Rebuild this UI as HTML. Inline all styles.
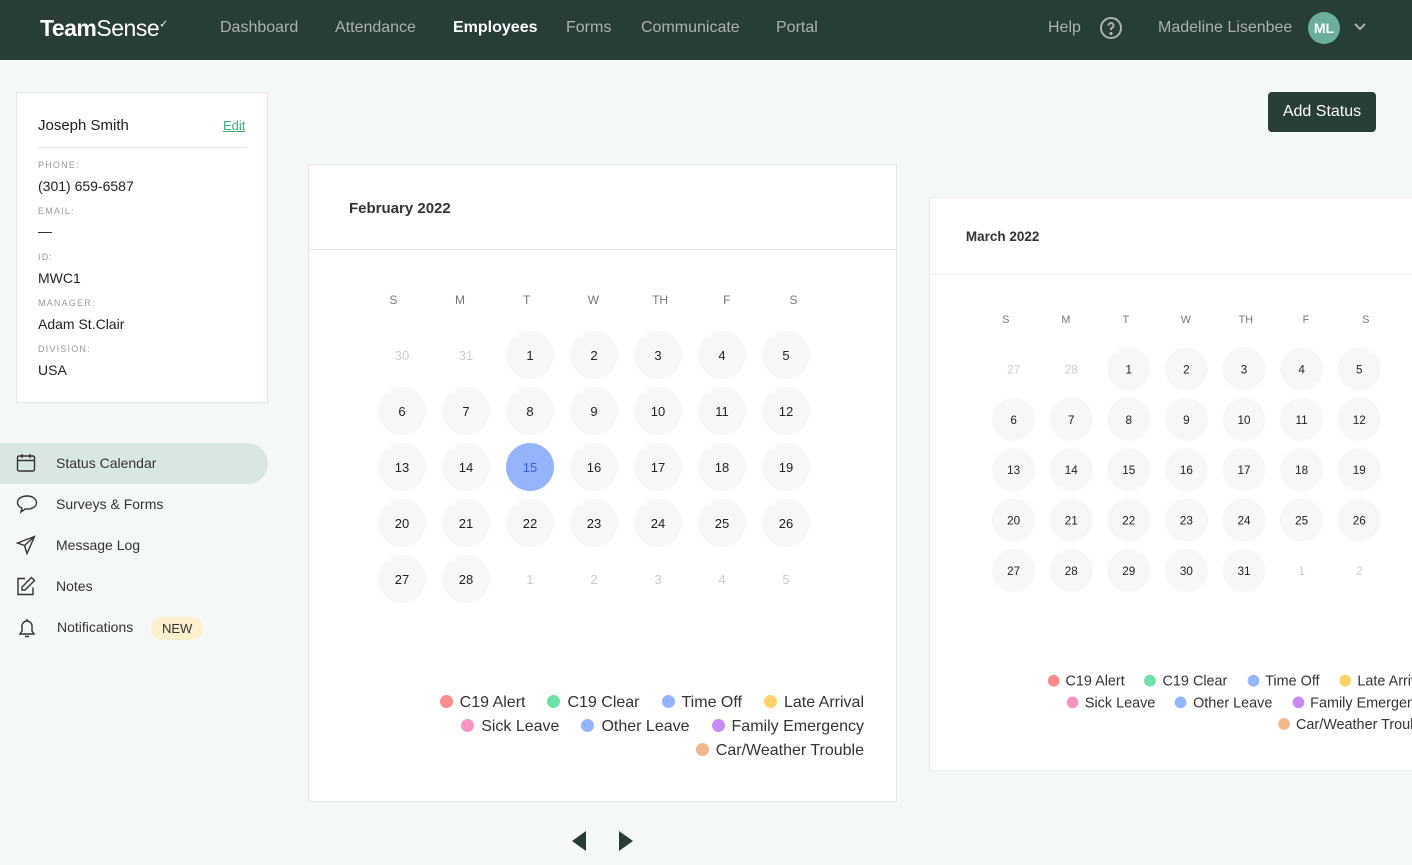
<!DOCTYPE html>
<html><head><meta charset="utf-8"><style>
*{box-sizing:border-box;margin:0;padding:0}
body{width:1412px;height:865px;overflow:hidden;background:#f4f8f7;font-family:"Liberation Sans",sans-serif;color:#222;position:relative}
.nav{position:absolute;left:0;top:0;width:1412px;height:60px;background:#283c38}
.nav span{position:absolute;top:19px;font-size:16px;color:#a9b3b0}
.logo{position:absolute;left:40px;top:15px;font-size:23px;color:#fff;letter-spacing:-0.5px}
.card{position:absolute;background:#fff;border:1px solid #e4e6e5}
.lbl{font-size:9px;letter-spacing:1.2px;color:#999;position:absolute;left:21px}
.val{font-size:14px;color:#222;position:absolute;left:21px}
.side{position:absolute;left:0;width:268px;height:41px;font-size:14px;color:#333}
.side .t{position:absolute;left:56px;top:12px}
.side svg{position:absolute;left:16px;top:10px}
.cal{position:absolute;width:589px;height:638px;background:#fff;border:1px solid #e4e6e5;transform-origin:0 0}
.cal h3{position:absolute;left:40px;top:35px;font-size:15px;font-weight:bold;color:#333}
.cal .hr{position:absolute;left:0;right:0;top:84px;border-top:1px solid #e8e8e8}
.wd{position:absolute;left:51px;top:128px;display:grid;grid-template-columns:repeat(7,66.7px);font-size:12px;color:#777;text-align:center}
.grid{position:absolute;left:61px;top:162px;display:grid;grid-template-columns:repeat(7,64px);grid-auto-rows:56px}
.grid div{width:48px;height:48px;margin:4px 8px;border-radius:50%;background:#f7f7f7;display:flex;align-items:center;justify-content:center;font-size:13px;color:#222}
.grid div.o{background:#fff;color:#ccc}
.grid div.s{background:#94b4fb;color:#3b5de0}
.leg{position:absolute;right:32px;font-size:16px;color:#333;text-align:right;white-space:nowrap}
.leg i{display:inline-block;width:13px;height:13px;border-radius:50%;vertical-align:-1px;margin:0 7px 0 22px}
</style></head><body>
<div class="nav">
<div class="logo"><b style="font-weight:bold">Team</b>Sense<sup style="font-size:11px">✓</sup></div>
<span style="left:220px">Dashboard</span><span style="left:335px">Attendance</span>
<span style="left:453px;color:#fff;font-weight:bold">Employees</span>
<span style="left:566px">Forms</span><span style="left:641px">Communicate</span><span style="left:776px">Portal</span>
<span style="left:1048px">Help</span>
<svg style="position:absolute;left:1099px;top:16px" width="24" height="24" viewBox="0 0 24 24" fill="none" stroke="#a9b3b0" stroke-width="2"><circle cx="12" cy="12" r="10"/><path d="M9.5 9.5a2.5 2.5 0 1 1 3.5 2.3c-.7.3-1 .8-1 1.5v.7"/><circle cx="12" cy="17.5" r=".6" fill="#a9b3b0"/></svg>
<span style="left:1158px">Madeline Lisenbee</span>
<div style="position:absolute;left:1308px;top:12px;width:32px;height:32px;border-radius:50%;background:#6aae9b;color:#fff;font-size:14px;font-weight:bold;text-align:center;line-height:32px">ML</div>
<svg style="position:absolute;left:1353px;top:22px" width="14" height="10" viewBox="0 0 14 10" fill="none" stroke="#a9b3b0" stroke-width="2"><path d="M2 2l5 5 5-5"/></svg>
</div>

<div class="card" style="left:16px;top:92px;width:252px;height:311px">
<div style="position:absolute;left:21px;top:24px;font-size:15px;color:#222">Joseph Smith</div>
<div style="position:absolute;left:206px;top:25px;font-size:13px;color:#3fb07a;text-decoration:underline">Edit</div>
<div style="position:absolute;left:21px;right:20px;top:54px;border-top:1px solid #e2e2e2"></div>
<div class="lbl" style="top:67px">PHONE:</div><div class="val" style="top:85px">(301) 659-6587</div>
<div class="lbl" style="top:113px">EMAIL:</div><div class="val" style="top:130px">—</div>
<div class="lbl" style="top:159px">ID:</div><div class="val" style="top:177px">MWC1</div>
<div class="lbl" style="top:205px">MANAGER:</div><div class="val" style="top:223px">Adam St.Clair</div>
<div class="lbl" style="top:251px">DIVISION:</div><div class="val" style="top:269px">USA</div>
</div>

<div class="side" style="top:443px;background:#d9e7e2;border-radius:0 21px 21px 0"><svg width="20" height="20" viewBox="0 0 20 20" fill="none" stroke="#333" stroke-width="1.4"><rect x="1.5" y="3" width="17" height="15" rx="1.5"/><path d="M1.5 7.5h17M6 1v4M14 1v4"/></svg><span class="t">Status Calendar</span></div>
<div class="side" style="top:484px"><svg width="22" height="20" viewBox="0 0 22 20" fill="none" stroke="#333" stroke-width="1.4"><path d="M11 2C5.5 2 1.5 4.8 1.5 8.5c0 2.5 1.8 4.5 4.5 5.6L5 18l4.2-3c.6.1 1.2.1 1.8.1 5.5 0 9.5-2.8 9.5-6.5S16.5 2 11 2z"/></svg><span class="t">Surveys &amp; Forms</span></div>
<div class="side" style="top:525px"><svg width="20" height="20" viewBox="0 0 20 20" fill="none" stroke="#333" stroke-width="1.4"><path d="M18.5 1.5L1.5 8l7 2.5L11 18.5z M18.5 1.5L8.5 10.5"/></svg><span class="t">Message Log</span></div>
<div class="side" style="top:566px"><svg width="20" height="20" viewBox="0 0 20 20" fill="none" stroke="#333" stroke-width="1.4"><path d="M9 2.5H2v16h15v-7"/><path d="M15.5 1.5l3 3L9 14H6v-3z"/></svg><span class="t">Notes</span></div>
<div class="side" style="top:607px"><svg width="22" height="22" viewBox="0 0 22 22" fill="none" stroke="#333" stroke-width="1.4"><path d="M4 17h14l-2-3V9a5 5 0 0 0-10 0v5z"/><path d="M9 19.5h4M11 2v2"/></svg><span class="t" style="left:57px">Notifications</span><span style="position:absolute;left:151px;top:10px;background:#fdf0cc;border-radius:12px;padding:4px 11px;font-size:13px;color:#333">NEW</span></div>

<div style="position:absolute;left:1268px;top:92px;width:108px;height:40px;background:#283c38;border-radius:4px;color:#fff;font-size:16px;text-align:center;line-height:40px">Add Status</div>

<div class="cal" style="left:308px;top:164px">
<h3>February 2022</h3><div class="hr"></div>
<div class="wd"><span>S</span><span>M</span><span>T</span><span>W</span><span>TH</span><span>F</span><span>S</span></div>
<div class="grid">
<div class="o">30</div><div class="o">31</div><div>1</div><div>2</div><div>3</div><div>4</div><div>5</div>
<div>6</div><div>7</div><div>8</div><div>9</div><div>10</div><div>11</div><div>12</div>
<div>13</div><div>14</div><div class="s">15</div><div>16</div><div>17</div><div>18</div><div>19</div>
<div>20</div><div>21</div><div>22</div><div>23</div><div>24</div><div>25</div><div>26</div>
<div>27</div><div>28</div><div class="o">1</div><div class="o">2</div><div class="o">3</div><div class="o">4</div><div class="o">5</div>
</div>
<div class="leg" style="top:529px"><i style="background:#fb8c8c"></i>C19 Alert<i style="background:#6fe0a8"></i>C19 Clear<i style="background:#94b4fb"></i>Time Off<i style="background:#fdd26a"></i>Late Arrival</div>
<div class="leg" style="top:553px"><i style="background:#f993c4"></i>Sick Leave<i style="background:#94b4fb"></i>Other Leave<i style="background:#c88af5"></i>Family Emergency</div>
<div class="leg" style="top:577px"><i style="background:#f2b78a"></i>Car/Weather Trouble</div>
</div>

<div class="cal" style="left:929px;top:197px;transform:scale(0.9)">
<h3>March 2022</h3><div class="hr"></div>
<div class="wd"><span>S</span><span>M</span><span>T</span><span>W</span><span>TH</span><span>F</span><span>S</span></div>
<div class="grid">
<div class="o">27</div><div class="o">28</div><div>1</div><div>2</div><div>3</div><div>4</div><div>5</div>
<div>6</div><div>7</div><div>8</div><div>9</div><div>10</div><div>11</div><div>12</div>
<div>13</div><div>14</div><div>15</div><div>16</div><div>17</div><div>18</div><div>19</div>
<div>20</div><div>21</div><div>22</div><div>23</div><div>24</div><div>25</div><div>26</div>
<div>27</div><div>28</div><div>29</div><div>30</div><div>31</div><div class="o">1</div><div class="o">2</div>
</div>
<div class="leg" style="top:529px"><i style="background:#fb8c8c"></i>C19 Alert<i style="background:#6fe0a8"></i>C19 Clear<i style="background:#94b4fb"></i>Time Off<i style="background:#fdd26a"></i>Late Arrival</div>
<div class="leg" style="top:553px"><i style="background:#f993c4"></i>Sick Leave<i style="background:#94b4fb"></i>Other Leave<i style="background:#c88af5"></i>Family Emergency</div>
<div class="leg" style="top:577px"><i style="background:#f2b78a"></i>Car/Weather Trouble</div>
</div>

<svg style="position:absolute;left:571px;top:830px" width="16" height="22" viewBox="0 0 16 22"><path d="M15 1L1 11l14 10z" fill="#283c38"/></svg>
<svg style="position:absolute;left:618px;top:830px" width="16" height="22" viewBox="0 0 16 22"><path d="M1 1l14 10L1 21z" fill="#283c38"/></svg>
</body></html>
